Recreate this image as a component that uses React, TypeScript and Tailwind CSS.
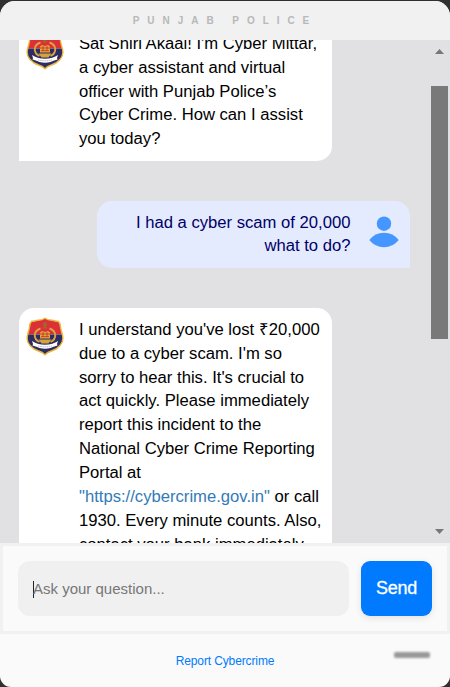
import type { ReactNode } from "react";

const SHIELD =
  "M5.500 4.500Q9 4.300 12 3.200Q16.500 3.200 19 1.200Q21.500 3.200 26 3.200Q29 4.300 32.500 4.500Q34.300 6.500 34.500 10Q35 13.500 36.200 17Q38.300 24 34 28.500Q30.500 32.500 25.500 34Q21.500 35.200 19 37.800Q16.500 35.200 12.500 34Q7.500 32.500 4 28.500Q-.3 24 1.800 17Q3 13.500 3.500 10Q3.700 6.500 5.500 4.500Z";

function Crest() {
  return (
    <svg viewBox="0 0 38 40" className="block h-[40px] w-[38px] shrink-0">
      <defs>
        <clipPath id="shield">
          <path d={SHIELD} />
        </clipPath>
      </defs>
      <g clipPath="url(#shield)">
        <rect width="38" height="17.500" fill="#dc3038" />
        <rect y="17.500" width="38" height="23" fill="#2d2c63" />
      </g>
      <path d={SHIELD} fill="none" stroke="#e9b83a" strokeWidth="1.400" />
      <path d="M17.300 5.500h3.400v2l-.5 2.500 1.200 1.500h-4.800l1.200-1.500-.5-2.500z" fill="#9c6b28" />
      <path d="M14.500 11.500C7 14 7 22 13.500 25M23.500 11.500C31 14 31 22 24.500 25" fill="none" stroke="#d8a63e" strokeWidth="1.900" />
      <path d="M14 15.500l2-1.500 3 1 3-1 2 1.500v6h-10z" fill="#e3a83b" />
      <path d="M14 17h10M15 19.700h8M17 15v5M21 15v5" stroke="#c23a2c" strokeWidth=".9" />
      <path d="M12.500 22.500h13l-3 4h-7z" fill="#d5a33d" />
      <path d="M6 24Q11 27.700 19 27.700Q27 27.700 32 24L31 27L31.500 28.500Q27 29.500 24.500 31Q19 32.500 13.500 31Q11 29.500 6.500 28.500L7 27Z" fill="#fff" />
      <path d="M12 28.900Q19 30.700 26 28.900" fill="none" stroke="#999" strokeWidth=".7" strokeDasharray="1.500 .7" />
    </svg>
  );
}

function Person() {
  return (
    <svg viewBox="0 0 30 32" className="mt-[6px] block h-[32px] w-[30px] shrink-0" fill="#4596ff">
      <circle cx="15" cy="7.700" r="7.200" />
      <path d="M.3 24Q6 16.700 15 16.700T29.700 24Q24 31.300 15 31.300T.3 24Z" />
    </svg>
  );
}

function Lines({ items }: { items: ReactNode[] }) {
  return (
    <div className="text-[16.65px] leading-[23.857px] whitespace-nowrap">
      {items.map((line, i) => (
        <div key={i}>{line}</div>
      ))}
    </div>
  );
}

function BotMessage({ items }: { items: ReactNode[] }) {
  return (
    <div className="flex w-[313px] items-start gap-[15px] rounded-t-[15px] rounded-br-[15px] bg-white pt-[9px] pr-[9px] pb-[9.8px] pl-[7px] text-black">
      <Crest />
      <div className="pt-[0.9px]">
        <Lines items={items} />
      </div>
    </div>
  );
}

export default function App() {
  return (
    <div className="h-[687px] w-[450px] bg-[#303031] pt-px font-['Liberation_Sans',Arial,sans-serif]">
      <main className="flex h-[686px] flex-col overflow-hidden rounded-t-[15px] rounded-b-[11px] bg-[#fafafa]">
        <header className="flex h-[39px] shrink-0 items-center justify-center bg-[#f1f1f1] text-[10px] font-bold tracking-[7.95px] text-[#b8b8b8]">
          PUNJAB POLICE
        </header>

        <section className="flex h-[503px] shrink-0 overflow-hidden bg-[#e1e1e3]">
          <div className="flex h-full w-[431px] flex-col gap-[40px] overflow-hidden pr-[21px] pl-[19px]">
            <div className="-mt-[18px] h-[139px] shrink-0">
              <BotMessage
                items={[
                  "Sat Shiri Akaal! I'm Cyber Mittar,",
                  "a cyber assistant and virtual",
                  "officer with Punjab Police’s",
                  "Cyber Crime. How can I assist",
                  "you today?",
                ]}
              />
            </div>
            <div className="flex h-[67px] w-[313px] shrink-0 items-start justify-end gap-[18.500px] self-end rounded-t-[15px] rounded-bl-[15px] bg-[#e4ebff] pt-[9px] pr-[11px] text-right text-[#000066]">
              <div className="pt-[0.6px]">
                <Lines items={["I had a cyber scam of 20,000", "what to do?"]} />
              </div>
              <Person />
            </div>
            <div className="shrink-0">
              <BotMessage
                items={[
                  "I understand you've lost ₹20,000",
                  "due to a cyber scam. I'm so",
                  "sorry to hear this. It's crucial to",
                  "act quickly. Please immediately",
                  "report this incident to the",
                  "National Cyber Crime Reporting",
                  "Portal at",
                  <>
                    <a className="text-[#337ab7]">"https://cybercrime.gov.in"</a> or call
                  </>,
                  "1930. Every minute counts. Also,",
                  "contact your bank immediately",
                ]}
              />
            </div>
          </div>
          <div className="flex w-[17px] flex-col items-center">
            <svg viewBox="0 0 9 5" className="mt-[9px] h-[5px] w-[9px] shrink-0" fill="#777">
              <path d="M0 5L4.500 0L9 5Z" />
            </svg>
            <div className="mt-[32px] h-[253px] w-[17px] bg-[#797979]" />
            <svg viewBox="0 0 9 5" className="mt-auto mb-[9px] h-[5px] w-[9px] shrink-0" fill="#777">
              <path d="M0 0L4.500 5L9 0Z" />
            </svg>
          </div>
        </section>

        <form className="flex h-[91px] shrink-0 items-start gap-[12px] border-[3px] border-[#f1f1f1] px-[15px] pt-[15px]">
          <div className="flex h-[55px] w-[331px] items-center rounded-[12px] bg-[#f0f0f0] pt-px pl-[15px] text-[15px] text-[#777]">
            <span className="h-[17px] w-px bg-[#222]" />
            <span className="-ml-px">Ask your question...</span>
          </div>
          <button type="button" className="h-[55px] w-[71px] rounded-[9px] bg-[#007bff] text-[18px] tracking-[-0.3px] text-white shadow-[0_2px_7px_rgba(0,0,0,0.1)] [-webkit-text-stroke:0.3px_white]">
            Send
          </button>
        </form>

        <footer className="grid h-[53px] shrink-0 grid-cols-[1fr_auto_1fr] items-center">
          <a className="col-start-2 text-[12px] tracking-[-0.12px] text-[#007bff]">Report Cybercrime</a>
          <div className="mr-[20px] mb-[12px] h-[6px] w-[36px] justify-self-end rounded-[2px] bg-[#999] blur-[0.8px]" />
        </footer>
      </main>
    </div>
  );
}
